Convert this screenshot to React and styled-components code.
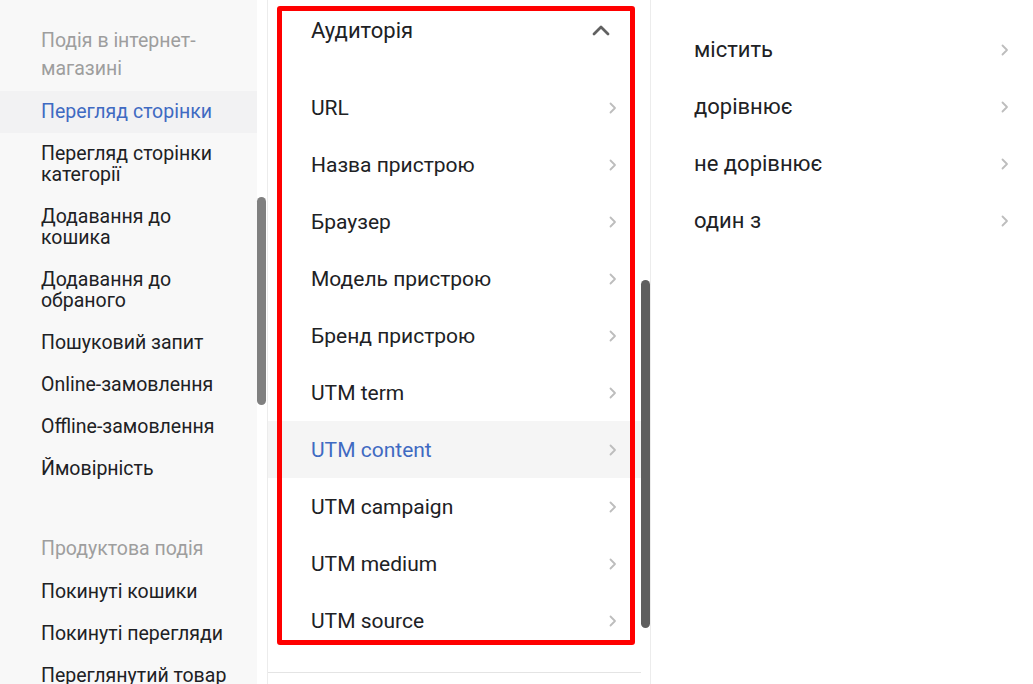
import styled, { createGlobalStyle } from "styled-components";

const GlobalStyle = createGlobalStyle`
  html, body {
    margin: 0;
    padding: 0;
    background: #ffffff;
    font-family: Roboto, "Noto Sans", Arial, sans-serif;
    color: #202124;
  }
  * {
    box-sizing: border-box;
  }
`;

const eventGroups = [
  {
    title: "Подія в інтернет-магазині",
    items: [
      { label: "Перегляд сторінки", active: true },
      { label: "Перегляд сторінки категорії" },
      { label: "Додавання до кошика" },
      { label: "Додавання до обраного" },
      { label: "Пошуковий запит" },
      { label: "Online-замовлення" },
      { label: "Offline-замовлення" },
      { label: "Ймовірність" },
    ],
  },
  {
    title: "Продуктова подія",
    items: [
      { label: "Покинуті кошики" },
      { label: "Покинуті перегляди" },
      { label: "Переглянутий товар" },
    ],
  },
];

const audienceItems = [
  "URL",
  "Назва пристрою",
  "Браузер",
  "Модель пристрою",
  "Бренд пристрою",
  "UTM term",
  "UTM content",
  "UTM campaign",
  "UTM medium",
  "UTM source",
];

const conditions = ["містить", "дорівнює", "не дорівнює", "один з"];

const ChevronRight = () => (
  <svg width="8" height="12" viewBox="0 0 8 12" fill="none">
    <path d="M1.5 1.5 L6 6 L1.5 10.5" stroke="#bdbdbd" strokeWidth="1.8" strokeLinecap="round" strokeLinejoin="round" />
  </svg>
);

const ChevronUp = () => (
  <svg width="18" height="12" viewBox="0 0 18 12" fill="none">
    <path d="M2 10 L9 3 L16 10" stroke="#616161" strokeWidth="2.8" strokeLinecap="round" strokeLinejoin="round" />
  </svg>
);

const App = () => {
  return (
    <>
      <GlobalStyle />
      <Page>
        <Sidebar>
          <SideList>
            {eventGroups.map((group, gi) => (
              <Group key={group.title} $first={gi === 0}>
                <GroupTitle>{group.title}</GroupTitle>
                {group.items.map((item) => (
                  <SideItem key={item.label} $active={item.active}>
                    <span>{item.label}</span>
                  </SideItem>
                ))}
              </Group>
            ))}
          </SideList>
          <Track>
            <Thumb $top={197} $height={208} $color="#808080" />
          </Track>
        </Sidebar>

        <Middle>
          <ListArea>
            <Header>
              <span>Аудиторія</span>
              <ChevronUp />
            </Header>
            <Rows>
              {audienceItems.map((label) => (
                <Row key={label} $active={label === "UTM content"}>
                  <span>{label}</span>
                  <ChevronRight />
                </Row>
              ))}
            </Rows>
          </ListArea>
          <Track>
            <Thumb $top={280} $height={348} $color="#5f5f5f" />
          </Track>
          <Marker />
        </Middle>

        <Conditions>
          {conditions.map((label) => (
            <Row key={label} $size={22}>
              <span>{label}</span>
              <ChevronRight />
            </Row>
          ))}
        </Conditions>
      </Page>
    </>
  );
};

const Page = styled.div`
  display: flex;
  height: 684px;
  overflow: hidden;
  background: #ffffff;
`;

const Sidebar = styled.aside`
  display: flex;
  width: 267px;
  flex-shrink: 0;
`;

const SideList = styled.div`
  width: 257px;
  background: #f8f8f8;
  padding-top: 27px;
  overflow: hidden;
`;

const Group = styled.div`
  margin-top: ${({ $first }) => ($first ? "0" : "45px")};
`;

const GroupTitle = styled.div`
  padding: 0 20px 0 41px;
  font-size: 19.5px;
  line-height: 28px;
  color: #9e9e9e;
  margin-bottom: 7.5px;
`;

const SideItem = styled.div`
  padding: 10.5px 18px 10.5px 41px;
  font-size: 19.5px;
  line-height: 21px;
  color: ${({ $active }) => ($active ? "#3f6ac2" : "#202124")};
  background: ${({ $active }) => ($active ? "#f2f2f3" : "transparent")};
`;

const Track = styled.div`
  width: 9px;
  flex-shrink: 0;
  display: flex;
  flex-direction: column;
  background: #ffffff;
`;

const Thumb = styled.div`
  margin-top: ${({ $top }) => $top}px;
  height: ${({ $height }) => $height}px;
  width: 9px;
  border-radius: 5px;
  background: ${({ $color }) => $color};
`;

const Middle = styled.section`
  position: relative;
  display: flex;
  width: 384px;
  flex-shrink: 0;
  border-left: 1px solid #ececec;
  border-right: 1px solid #ececec;
`;

const ListArea = styled.div`
  flex: 1;
  height: 673px;
  border-bottom: 1px solid #e4e4e4;
  overflow: hidden;
`;

const Header = styled.div`
  height: 60px;
  display: flex;
  align-items: center;
  justify-content: space-between;
  padding: 0 31px 0 43px;
  font-size: 22px;
  color: #202124;
`;

const Rows = styled.div`
  padding-top: 19px;
`;

const Row = styled.div`
  height: 57px;
  display: flex;
  align-items: center;
  justify-content: space-between;
  padding: 0 24px 0 43px;
  font-size: ${({ $size }) => $size || 21}px;
  color: ${({ $active }) => ($active ? "#3f6ac2" : "#202124")};
  background: ${({ $active }) => ($active ? "#f5f5f5" : "transparent")};
`;

const Marker = styled.div`
  position: absolute;
  left: 9px;
  top: 6px;
  width: 358px;
  height: 639px;
  border: 5px solid #ff0000;
  border-radius: 3px;
  pointer-events: none;
`;

const Conditions = styled.section`
  flex: 1;
  padding-top: 21px;
`;

export default App;
